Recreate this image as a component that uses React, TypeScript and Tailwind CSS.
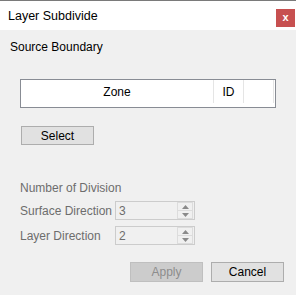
import React from "react";

const Spinner: React.FC = () => (
  <div className="flex flex-col w-[16px] h-[17px] mr-[1px] border border-[#dcdcdc] bg-[#f0f0f0]">
    <div className="flex-1 flex items-center justify-center border-b border-[#dcdcdc]">
      <svg width="7" height="4" viewBox="0 0 7 4">
        <path d="M0 4 L3.5 0 L7 4 Z" fill="#8a8a8a" />
      </svg>
    </div>
    <div className="flex-1 flex items-center justify-center">
      <svg width="7" height="4" viewBox="0 0 7 4">
        <path d="M0 0 L3.5 4 L7 0 Z" fill="#8a8a8a" />
      </svg>
    </div>
  </div>
);

const NumberRow: React.FC<{ label: string; value: string; className?: string }> = ({
  label,
  value,
  className,
}) => (
  <div className={"flex items-center " + (className || "")}>
    <span className="w-[95px] pl-[20px] box-content text-[#6d6d6d]">{label}</span>
    <div className="flex items-center justify-between w-[80px] h-[19px] border border-[#cccccc] bg-[#f0f0f0]">
      <span className="pl-[3px] text-[#6d6d6d]">{value}</span>
      <Spinner />
    </div>
  </div>
);

const App: React.FC = () => {
  return (
    <div
      className="w-[296px] h-[295px] bg-[#f0f0f0] border-t border-[#7a7a7a] flex flex-col text-[12px] leading-[14px] text-black"
      style={{ fontFamily: '"Liberation Sans", Arial, sans-serif' }}
    >
      <header className="h-[29px] bg-white flex justify-between pl-[8px] pr-[1px]">
        <span className="self-center text-[12.5px]">Layer Subdivide</span>
        <button className="self-end mb-[3px] w-[19px] h-[18px] bg-[#c75050] text-white text-[11px] font-bold leading-[18px] flex items-center justify-center pb-[2px]">
          x
        </button>
      </header>

      <div className="flex flex-col">
        <div className="pl-[10px] mt-[10px]">Source Boundary</div>

        <div className="ml-[20px] mt-[25px] w-[256px] h-[29px] border border-[#888c94] bg-white flex">
          <div className="w-[193px] h-[23px] flex items-center justify-center border-r border-[#e5e5e5]">
            Zone
          </div>
          <div className="w-[30px] h-[23px] flex items-center justify-center border-r border-[#e5e5e5]">
            ID
          </div>
          <div className="w-[30px] h-[23px] border-r border-[#e5e5e5]" />
        </div>

        <button className="ml-[21px] mt-[18px] w-[73px] h-[19px] bg-[#e1e1e1] border border-[#adadad] flex items-center justify-center">
          Select
        </button>

        <div className="pl-[20px] mt-[36px] text-[#6d6d6d]">Number of Division</div>

        <NumberRow label="Surface Direction" value="3" className="mt-[6px]" />
        <NumberRow label="Layer Direction" value="2" className="mt-[6px]" />

        <div className="flex justify-end gap-[8px] pr-[12px] mt-[17px]">
          <button className="w-[73px] h-[20px] bg-[#cccccc] border border-[#bfbfbf] text-[#8d8d8d] flex items-center justify-center">
            Apply
          </button>
          <button className="w-[73px] h-[20px] bg-[#e1e1e1] border border-[#adadad] flex items-center justify-center">
            Cancel
          </button>
        </div>
      </div>
    </div>
  );
};

export default App;
